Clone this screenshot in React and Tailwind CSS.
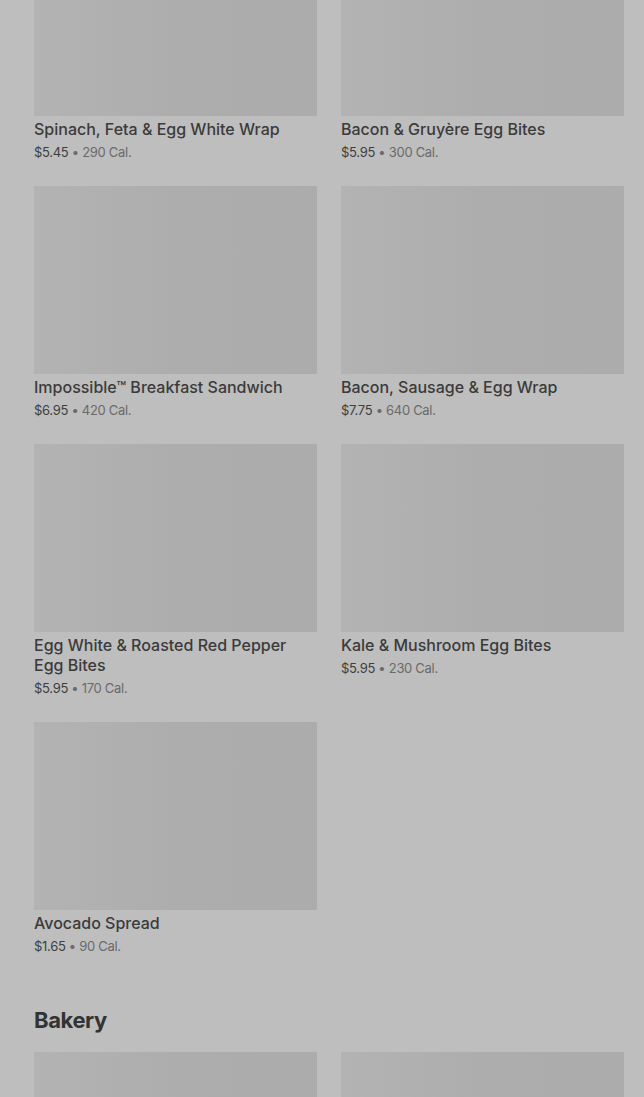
import React from 'react';

const items = [
  { name: 'Spinach, Feta & Egg White Wrap', price: '$5.45', cal: '290 Cal.' },
  { name: 'Bacon & Gruyère Egg Bites', price: '$5.95', cal: '300 Cal.' },
  { name: 'Impossible™ Breakfast Sandwich', price: '$6.95', cal: '420 Cal.' },
  { name: 'Bacon, Sausage & Egg Wrap', price: '$7.75', cal: '640 Cal.' },
  { name: 'Egg White & Roasted Red Pepper Egg Bites', price: '$5.95', cal: '170 Cal.' },
  { name: 'Kale & Mushroom Egg Bites', price: '$5.95', cal: '230 Cal.' },
  { name: 'Avocado Spread', price: '$1.65', cal: '90 Cal.' },
];

const Placeholder = () => (
  <div className="h-[188px] w-full bg-gradient-to-r from-[#b3b3b3] via-[#adadad] to-[#acacac]" />
);

const ItemCard = ({ item }) => (
  <div className="flex flex-col">
    <Placeholder />
    <p className="mt-[3px] text-[16px] leading-5 font-medium text-[#3b3b3b]">{item.name}</p>
    <p className="mt-[4px] text-[13px] leading-[18px] tracking-[-0.3px]">
      <span className="text-[#3e3e3e]">{item.price}</span>
      <span className="text-[#6a6a6a]"> • {item.cal}</span>
    </p>
  </div>
);

export default function App() {
  return (
    <div
      className="min-h-[1097px] overflow-hidden bg-[#bebebe]"
      style={{ fontFamily: 'Inter, "Noto Sans", sans-serif' }}
    >
      <div className="-mt-[72px] pl-[34px] pr-[20px]">
        <div className="grid grid-cols-2 gap-x-6 gap-y-[25px] items-start">
          {items.map((item, i) => (
            <ItemCard key={i} item={item} />
          ))}
        </div>

        <h2 className="mt-[51px] text-[22px] leading-7 font-bold tracking-[-0.4px] text-[#333333]">Bakery</h2>

        <div className="mt-[18px] grid grid-cols-2 gap-x-6">
          <Placeholder />
          <Placeholder />
        </div>
      </div>
    </div>
  );
}
